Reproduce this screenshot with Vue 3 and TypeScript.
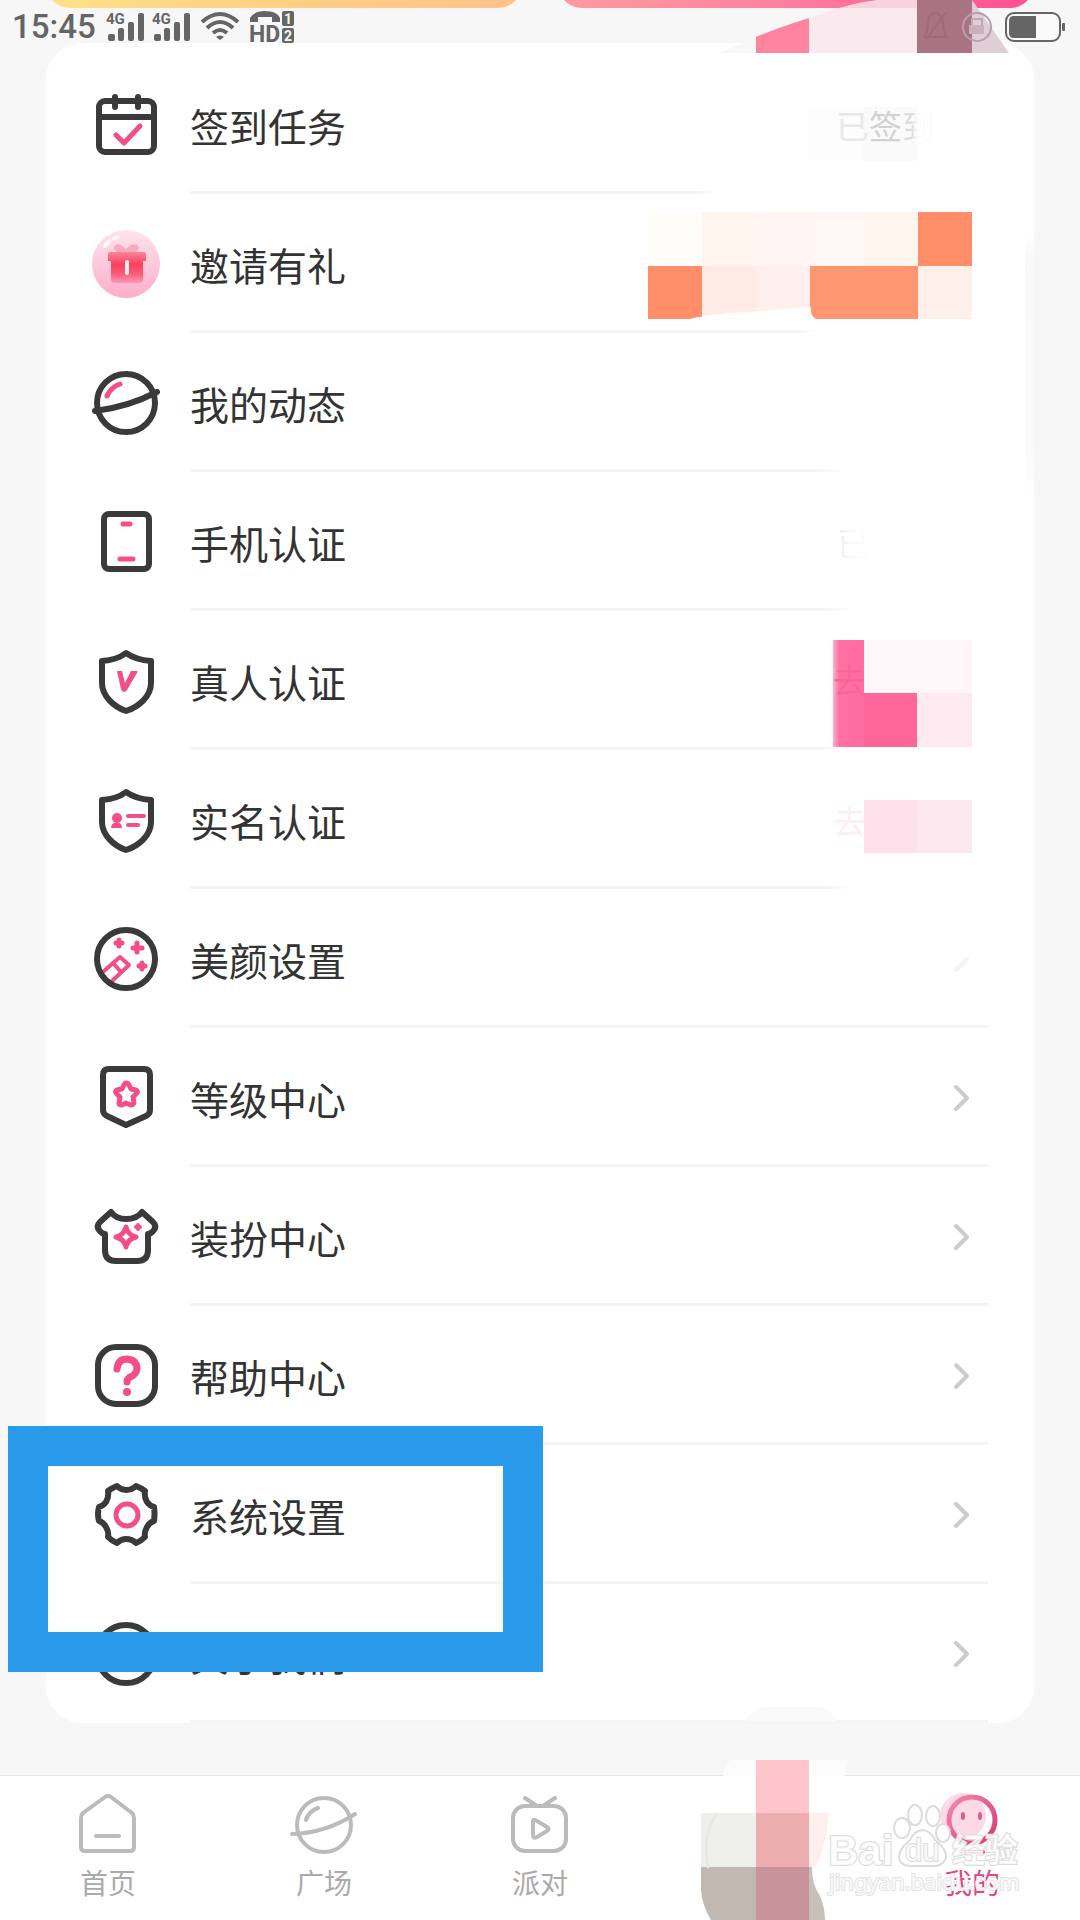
<script setup lang="ts">
interface MenuRow {
  id: string
  label: string
  ruleWidth: number
  trailing: 'chevron' | 'checked' | 'invite' | 'phone' | 'person' | 'identity' | 'faded' | 'none'
}

const rows: MenuRow[] = [
  { id: 'calendar', label: '签到任务', ruleWidth: 66, trailing: 'checked' },
  { id: 'gift', label: '邀请有礼', ruleWidth: 79, trailing: 'invite' },
  { id: 'moments', label: '我的动态', ruleWidth: 82, trailing: 'none' },
  { id: 'phone', label: '手机认证', ruleWidth: 83, trailing: 'phone' },
  { id: 'person', label: '真人认证', ruleWidth: 82, trailing: 'person' },
  { id: 'identity', label: '实名认证', ruleWidth: 83, trailing: 'identity' },
  { id: 'beauty', label: '美颜设置', ruleWidth: 100, trailing: 'faded' },
  { id: 'level', label: '等级中心', ruleWidth: 100, trailing: 'chevron' },
  { id: 'outfit', label: '装扮中心', ruleWidth: 100, trailing: 'chevron' },
  { id: 'help', label: '帮助中心', ruleWidth: 100, trailing: 'chevron' },
  { id: 'settings', label: '系统设置', ruleWidth: 100, trailing: 'chevron' },
  { id: 'about', label: '关于我们', ruleWidth: 100, trailing: 'chevron' }
]

const inviteCells: string[] = [
  '#fffdfa', '#fff6f0', '#fff6f3', '#fff7f6', '#fff6f0', '#ff8e69',
  '#ff8e69', '#feebe5', '#fff0ed', '#ff9671', '#ff9671', '#fff0eb'
]
</script>

<template>
  <div class="page">
    <header class="top">
      <div class="promos">
        <div class="promo gold"></div>
        <div class="promo rose"></div>
      </div>
      <svg class="top-veil" width="300" height="53" viewBox="720 0 300 53" aria-hidden="true">
        <path d="M718 53 Q738 45 756 38 V53Z" fill="#f8f8f8" />
        <path d="M756 37 Q780 27 809 18 V53 H756Z" fill="#ff84a0" />
        <path d="M809 18 Q850 3 880 0 H917 V53 H809Z" fill="#fae9ee" />
        <path d="M840 8 Q862 1 880 0 H917 V8Z" fill="#f8d3df" />
        <path d="M917 0 H972 V53 H917Z" fill="#a97383" />
        <path d="M972 0 L1009 53 H972Z" fill="#dfced5" />
        <g fill="none" stroke-width="2">
          <path d="M924 37 H947 Q943 32 943 24 Q942 13 935 13 Q928 14 928 24 Q928 32 924 37 M926 40 L946 12" stroke="#9f6b7b" />
          <circle cx="977" cy="27" r="14" stroke="#b99fa9" />
          <path d="M972 26 V19 H982 V26" stroke="#c0a8b1" />
        </g>
        <path d="M969 25 H984 V34 H969Z" fill="#c8b1bb" />
      </svg>
      <div class="status">
        <span class="clock">15:45</span>
        <svg width="84" height="32" viewBox="106 11 84 32" fill="#656565" aria-hidden="true">
          <g v-for="x in [0, 46]" :key="x" :transform="`translate(${x} 0)`">
            <text x="106" y="24" class="net">4G</text>
            <rect x="108" y="34" width="7" height="7" rx="2" />
            <rect x="118" y="28" width="6" height="13" rx="2" />
            <rect x="128" y="22" width="6" height="19" rx="2" />
            <rect x="138" y="13" width="6" height="28" rx="2" />
          </g>
        </svg>
        <svg width="40" height="32" viewBox="200 11 40 32" fill="none" stroke="#656565" stroke-width="4" aria-hidden="true">
          <path d="M202 22 Q220 6 238 22 M207 28 Q220 16 233 28 M213 33 Q220 27 227 33" />
          <path d="M216 37 Q220 34 224 37 L220 40Z" fill="#656565" stroke="none" />
        </svg>
        <svg width="45" height="32" viewBox="250 11 45 32" fill="#656565" aria-hidden="true">
          <path d="M250 22 V18 Q254 11 265 11 Q277 11 280 18 V22 H272 V17 H258 V22Z" />
          <text x="249" y="42" class="hd">HD</text>
          <rect x="282" y="11" width="12" height="15" rx="2" />
          <rect x="282" y="28" width="12" height="15" rx="2" />
          <text x="284" y="24" class="sim">1</text>
          <text x="284" y="41" class="sim">2</text>
        </svg>
        <svg class="battery" width="61" height="32" viewBox="1005 11 61 32" aria-hidden="true">
          <rect x="1006" y="13" width="54" height="28" rx="8" fill="#f9f9f9" stroke="#656565" stroke-width="2" />
          <path d="M1036 16 H1014 Q1009 16 1009 21 V33 Q1009 38 1014 38 H1036Z" fill="#656565" />
          <rect x="1062" y="23" width="3" height="8" rx="1" fill="#656565" />
        </svg>
      </div>
    </header>

    <main class="card">
      <div class="edge"></div>
      <ul class="menu">
        <li v-for="row in rows" :key="row.id" class="row">
          <a class="link" href="#">
            <svg class="icon" width="72" height="72" viewBox="0 0 72 72" aria-hidden="true">
              <g v-if="row.id === 'calendar'">
                <rect x="9" y="12" width="55" height="51" rx="6" />
                <path d="M9 28 H64 M25 8 V18 M48 8 V18" />
                <path class="pink" d="M26 46 L34 54 L50 37" />
              </g>
              <g v-else-if="row.id === 'gift'">
                <defs>
                  <linearGradient id="bubble" x1="0" y1="0" x2="0" y2="1">
                    <stop offset="0" stop-color="#fce4ed" /><stop offset="1" stop-color="#fdaecb" />
                  </linearGradient>
                  <linearGradient id="box" x1="0" y1="24" x2="0" y2="55" gradientUnits="userSpaceOnUse">
                    <stop offset="0" stop-color="#f9859b" /><stop offset=".4" stop-color="#fb405d" /><stop offset=".7" stop-color="#fb5a76" /><stop offset="1" stop-color="#fc9ab6" />
                  </linearGradient>
                </defs>
                <circle cx="36" cy="36" r="34" fill="url(#bubble)" stroke="none" />
                <path d="M36 24 Q27 15 26 20 Q26 23 36 24 Q46 23 47 20 Q45 15 36 24" stroke="#fba9bd" stroke-width="4" />
                <path d="M20 24 H54 Q56 24 56 27 V33 H53 V51 Q53 55 49 55 H25 Q21 55 21 51 V33 H18 V27 Q18 24 20 24Z" fill="url(#box)" stroke="none" />
                <path d="M37 34 V45" stroke="#fff0f3" stroke-width="4" />
                <path d="M15 18 Q20 11 28 9" stroke="#fff6fa" stroke-width="4" stroke-dasharray="7 5" />
              </g>
              <g v-else-if="row.id === 'moments'">
                <circle cx="36" cy="36" r="29" />
                <path d="M5 44 Q38 40 67 25" />
                <path class="pink" d="M17 29 Q21 20 30 17" />
              </g>
              <g v-else-if="row.id === 'phone'">
                <rect x="14" y="8" width="45" height="55" rx="5" />
                <path class="pink" d="M33 18 H40 M30 53 H43" />
              </g>
              <g v-else-if="row.id === 'person' || row.id === 'identity'">
                <path d="M36 8 Q27 15 12 16 V38 C12 51 24 62 36 66 C49 62 61 51 61 38 V16 Q46 15 36 8Z" />
                <path v-if="row.id === 'person'" d="M27 26 H32 L35 38 L41 26 H47 Q48 27 47 28 L37 45 Q36 47 34 47 Q32 47 31 44Z" fill="#f44e87" stroke="none" />
                <g v-else>
                  <circle cx="27" cy="34" r="5" fill="#f44e87" stroke="none" />
                  <path d="M21 44 Q21 39 27 38 Q32 39 32 44Z" fill="#f44e87" stroke="none" />
                  <path class="pink thin" d="M38 32 H54 M38 41 H48" />
                </g>
              </g>
              <g v-else-if="row.id === 'beauty'">
                <path class="pink thin" d="M14 48 L30 34 L39 42 L21 59 M23 40 L31 49" stroke-width="5" />
                <circle cx="36" cy="36" r="29" />
                <path class="pink" d="M26 20 H32 M29 17 V23 M43 25 H52 M47 20 V29 M49 43 H55 M52 40 V46" />
              </g>
              <g v-else-if="row.id === 'level'">
                <path d="M13 13 Q13 7 19 7 H54 Q60 7 60 13 V48 Q60 52 56 54 L36 63 L17 54 Q13 52 13 48Z" />
                <path class="pink" d="M36 21 Q38 21 39 23 L41 27 L46 28 Q48 29 47 31 L43 35 L44 41 Q43 43 41 43 L36 41 L32 43 Q29 43 29 41 L30 35 L26 31 Q25 29 27 28 L32 27 L34 23 Q35 21 36 21Z" />
              </g>
              <g v-else-if="row.id === 'outfit'">
                <path d="M21 11 L10 21 Q6 25 9 29 Q12 33 15 33 V49 Q15 60 26 60 H47 Q58 60 58 49 V33 Q61 33 64 29 Q67 25 63 21 L52 11 Q47 18 36 18 Q26 18 21 11Z" />
                <path class="pink" d="M36 26 Q38 34 46 36 Q38 38 36 46 Q34 38 26 36 Q34 34 36 26Z" />
                <path class="pink thin" d="M48 24 V28 M46 26 H50" />
              </g>
              <g v-else-if="row.id === 'help'">
                <rect x="8" y="7" width="57" height="57" rx="18" />
                <path class="pink bold" d="M27 29 Q28 19 37 19 Q47 20 47 29 Q46 35 40 37 Q37 39 37 42" />
                <circle cx="37" cy="52" r="4" fill="#f44e87" stroke="none" />
              </g>
              <g v-else-if="row.id === 'settings'">
                <path d="M27 7 Q31 11 36 11 Q42 11 46 7 Q51 9 55 12 Q54 18 57 23 Q60 27 64 28 Q65 35 64 42 Q60 43 57 48 Q54 53 55 58 Q51 62 46 64 Q42 60 36 60 Q31 60 27 64 Q22 62 18 58 Q19 53 16 48 Q13 43 9 42 Q7 35 9 28 Q13 27 16 23 Q19 18 18 12 Q22 9 27 7Z" />
                <circle class="pink" cx="37" cy="36" r="11" />
              </g>
              <g v-else>
                <circle cx="36" cy="36" r="29" />
              </g>
            </svg>
            <span class="body">
              <span class="line">
                <span class="label">{{ row.label }}</span>
                <svg v-if="row.trailing === 'chevron'" class="chevron" width="24" height="32" viewBox="0 0 24 32" aria-hidden="true">
                  <path d="M6 5 L17 16 L6 27" />
                </svg>
                <svg v-else-if="row.trailing === 'faded'" class="chevron faded" width="24" height="32" viewBox="0 0 24 32" aria-hidden="true">
                  <path d="M17 16 L6 27" />
                </svg>
                <span v-else-if="row.trailing === 'checked'" class="checked">
                  <span class="checked-text"><span class="ghost">已</span>签<span class="cut">到</span></span>
                </span>
                <span v-else-if="row.trailing === 'invite'" class="mosaic">
                  <span v-for="(cell, i) in inviteCells" :key="i" :style="{ background: cell }"></span>
                  <svg class="smear" width="324" height="107" viewBox="0 0 324 107" aria-hidden="true">
                    <path d="M42 107 Q52 104 80 101 Q120 99 163 95 Q162 104 168 107Z" fill="#fff" />
                  </svg>
                </span>
                <span v-else-if="row.trailing === 'phone'" class="trace">已</span>
                <span v-else-if="row.trailing === 'person'" class="tag">
                  <span class="go">去</span><span class="c1"></span><span class="c2"></span><span class="c3"></span><span class="c4"></span>
                </span>
                <span v-else-if="row.trailing === 'identity'" class="strip">
                  <span class="go">去</span><span class="s1"></span><span class="s2"></span>
                </span>
              </span>
              <span class="rule" :style="{ width: row.ruleWidth + '%' }" :class="{ soft: row.ruleWidth < 100 }"></span>
            </span>
          </a>
          <div v-if="row.id === 'settings'" class="highlight"></div>
        </li>
      </ul>
    </main>

    <nav class="tabs">
      <a class="tab" href="#">
        <svg width="72" height="68" viewBox="0 0 72 68" aria-hidden="true">
          <path d="M9 28 Q9 25 11 23 L33 7 Q36 5 39 7 L60 23 Q62 25 62 28 V57 Q62 61 58 61 H13 Q9 61 9 57Z M24 46 H47" />
        </svg>
        <span>首页</span>
      </a>
      <a class="tab" href="#">
        <svg width="72" height="68" viewBox="0 0 72 68" aria-hidden="true">
          <circle cx="36" cy="35" r="27" />
          <path d="M4 44 Q38 43 67 24 M18 30 Q21 21 30 18" />
        </svg>
        <span>广场</span>
      </a>
      <a class="tab" href="#">
        <svg width="72" height="68" viewBox="0 0 72 68" aria-hidden="true">
          <rect x="9" y="16" width="53" height="45" rx="12" />
          <path d="M21 8 L33 16 M51 8 L39 16 M29 32 Q29 28 33 31 L43 37 Q46 39 43 41 L33 47 Q29 49 29 45Z" />
        </svg>
        <span>派对</span>
      </a>
      <a class="tab" href="#" aria-label="消息">
        <svg class="blot" width="216" height="213" viewBox="648 1707 216 213" aria-hidden="true">
          <path d="M745 1722 Q750 1710 764 1707 H820 Q832 1710 838 1722Z" fill="#f9f9f9" />
          <path d="M723 1776 Q725 1763 731 1760 H848 Q845 1766 845 1776Z" fill="#fcfcfc" />
          <path d="M701 1813 H756 V1867 H701Z" fill="#efefed" />
          <path d="M701 1867 H756 V1920 H711 Q702 1905 701 1890Z" fill="#c1b8b1" />
          <path d="M809 1813 H829 Q826 1845 816 1867 H809Z" fill="#feeeee" />
          <path d="M809 1867 H812 Q812 1885 820 1896 Q825 1908 825 1920 H809Z" fill="#c9c0b9" />
          <path d="M756 1760 H809 V1813 H756Z" fill="#ffc5cb" />
          <path d="M756 1813 H809 V1867 H756Z" fill="#ebadb0" />
          <path d="M756 1867 H809 V1920 H756Z" fill="#c9939b" />
          <path d="M708 1867 Q702 1835 716 1815" fill="none" stroke="#e8e8e6" stroke-width="3" />
        </svg>
      </a>
      <a class="tab active" href="#">
        <svg width="72" height="68" viewBox="0 0 72 68" aria-hidden="true">
          <defs>
            <linearGradient id="face" x1="0" y1="0" x2="1" y2="1">
              <stop offset="0" stop-color="#f38bb1" /><stop offset="1" stop-color="#d93672" />
            </linearGradient>
          </defs>
          <circle cx="27" cy="26" r="23" fill="#fdd9e5" stroke="none" />
          <circle cx="36" cy="30" r="23" stroke="url(#face)" stroke-width="5" />
          <ellipse cx="27" cy="26" rx="2" ry="4" fill="#e25a8a" stroke="none" />
          <ellipse cx="44" cy="26" rx="2" ry="4" fill="#e25a8a" stroke="none" />
          <path d="M25 62 H47" stroke="#e2457f" />
        </svg>
        <span>我的</span>
      </a>
      <svg class="watermark" width="200" height="100" viewBox="825 1800 200 100" aria-hidden="true">
        <g fill="#fff" fill-opacity=".8" stroke="#dcdcdc" stroke-width="2">
          <ellipse cx="902" cy="1828" rx="8" ry="10" />
          <ellipse cx="915" cy="1815" rx="7" ry="10" />
          <ellipse cx="933" cy="1816" rx="7" ry="10" />
          <ellipse cx="943" cy="1833" rx="7" ry="9" />
          <path d="M922 1830 Q930 1830 935 1840 Q947 1849 946 1858 Q942 1867 932 1866 H912 Q899 1866 899 1856 Q900 1848 910 1840 Q914 1831 922 1830Z" />
          <text x="828" y="1865" class="wm-big">Bai</text>
          <text x="905" y="1861" class="wm-du">du</text>
          <text x="952" y="1862" class="wm-cn">经验</text>
          <text x="829" y="1890" class="wm-url">jingyan.baidu.com</text>
        </g>
      </svg>
    </nav>
  </div>
</template>

<style>
body {
  background: #f7f7f7;
}
</style>

<style scoped>
.page {
  display: flex;
  flex-direction: column;
  min-height: 100vh;
  overflow: hidden;
  background: #f7f7f7;
  color: #333;
  font-family: "Noto Sans CJK SC", "Noto Sans", sans-serif;
}

.top {
  position: relative;
  height: 43px;
}

.promos {
  display: flex;
  gap: 36px;
  height: 8px;
  padding: 0 46px;
  overflow: hidden;
  align-items: flex-end;
}

.promo {
  flex: 1;
  height: 60px;
  border-radius: 24px;
}

.gold {
  background: linear-gradient(90deg, #ffe189, #ffd082 50%, #ffc28c);
}

.rose {
  background: linear-gradient(90deg, #ff9a9f, #ff86a0 40%, #ff4f90);
}

.top-veil {
  position: absolute;
  top: 0;
  right: 60px;
  z-index: 2;
}

.status {
  position: relative;
  z-index: 3;
  display: flex;
  align-items: center;
  gap: 10px;
  height: 32px;
  margin-top: 3px;
  padding: 0 14px 0 12px;
}

.clock {
  width: 84px;
  color: #656565;
  font: 500 33px/36px Roboto, sans-serif;
}

.net {
  font: 700 15px Roboto, sans-serif;
}

.hd {
  font: 700 23px Roboto, sans-serif;
}

.sim {
  fill: #f7f7f7;
  font: 700 14px Roboto, sans-serif;
}

.battery {
  margin-left: auto;
}

.card {
  position: relative;
  margin: 0 46px 52px;
  padding: 12px 46px 0 44px;
  border-radius: 36px;
  background: #fff;
}

.edge {
  position: absolute;
  top: 188px;
  right: 0;
  width: 9px;
  height: 270px;
  background: linear-gradient(#fff, #f9f9f9 10%, #fafafa 80%, #fff);
}

.menu {
  margin: 0;
  padding: 0;
  list-style: none;
}

.row {
  position: relative;
}

.link {
  display: flex;
  gap: 28px;
  height: 139px;
  color: inherit;
  text-decoration: none;
}

.icon {
  flex: none;
  margin-top: 34px;
  fill: none;
  stroke: #3a3a3a;
  stroke-width: 6px;
  stroke-linecap: round;
  stroke-linejoin: round;
}

.pink {
  stroke: #f44e87;
  stroke-width: 5px;
}

.thin {
  stroke-width: 4px;
}

.bold {
  stroke-width: 7px;
}

.body {
  display: flex;
  flex: 1;
  flex-direction: column;
}

.line {
  display: flex;
  flex: 1;
  align-items: center;
  justify-content: space-between;
  padding: 3px 14px 0 0;
}

.label {
  font-size: 39px;
  line-height: 56px;
}

.rule {
  height: 3px;
  background: #f4f4f4;
}

.soft {
  background: linear-gradient(90deg, #f4f4f4 96%, #fff);
}

.chevron {
  fill: none;
  stroke: #ccc;
  stroke-width: 4px;
  stroke-linecap: round;
  stroke-linejoin: round;
}

.faded {
  stroke: #f4f4f4;
}

.checked {
  align-self: flex-start;
  width: 108px;
  height: 54px;
  margin: 49px 57px 0 0;
  background: linear-gradient(90deg, #fdfdfd 50%, #fafafa 50%);
}

.checked-text {
  display: block;
  padding-left: 27px;
  color: #d2d2d2;
  font-size: 33px;
  line-height: 36px;
  white-space: nowrap;
}

.ghost {
  color: #e8e8e8;
}

.cut {
  color: transparent;
  background: linear-gradient(90deg, #ddd 30%, #fafafa 45%, #fdfdfd);
  background-clip: text;
}

.mosaic {
  position: relative;
  display: grid;
  grid-template-columns: repeat(6, 54px);
  grid-template-rows: 54px 53px;
  margin: 4px 2px 0 0;
}

.smear {
  position: absolute;
  inset: 0;
}

.trace {
  width: 33px;
  margin-right: 104px;
  color: transparent;
  background: linear-gradient(90deg, #ededed 10%, #fafafa 40%, #fdfdfd);
  background-clip: text;
  font-size: 33px;
  line-height: 44px;
}

.tag {
  display: grid;
  grid-template: 53px 54px / 31px 53px 55px;
  margin: 1px 2px 0 0;
  padding-top: 24px;
}

.go {
  overflow: hidden;
  font-size: 33px;
}

.tag .go {
  grid-row: 1 / 3;
  background: linear-gradient(90deg, #ffb0cc, #ff71a2 20%, #ff6ca0);
  color: #fb6498;
  line-height: 78px;
}

.c1,
.c2 {
  background: #fff6f9;
}

.c3 {
  background: #ff679b;
}

.c4 {
  background: #fdeaf1;
}

.strip {
  display: flex;
  width: 139px;
  height: 53px;
  margin: 13px 2px 0 0;
}

.strip .go {
  width: 31px;
  color: #feeef3;
  line-height: 40px;
}

.s1 {
  width: 53px;
  background: #fde0ea;
}

.s2 {
  width: 55px;
  background: #fde8ef;
}

.highlight {
  position: absolute;
  top: -19px;
  left: -82px;
  z-index: 2;
  box-sizing: border-box;
  width: 535px;
  height: 246px;
  border: 40px solid #2a9aea;
}

.tabs {
  position: relative;
  display: flex;
  height: 144px;
  margin-top: auto;
  border-top: 1px solid #e8e8e8;
  background: #fff;
}

.tab {
  position: relative;
  display: flex;
  flex: 1;
  flex-direction: column;
  align-items: center;
  padding-top: 14px;
  color: #aaa;
  font-size: 28px;
  line-height: 40px;
  text-decoration: none;
  fill: none;
  stroke: #bbb;
  stroke-width: 4px;
  stroke-linecap: round;
  stroke-linejoin: round;
}

.tab span {
  margin-top: 4px;
}

.active {
  color: #e2457f;
}

.blot {
  position: absolute;
  bottom: 0;
  left: 0;
  stroke: none;
}

.watermark {
  position: absolute;
  right: 55px;
  bottom: 20px;
}

.watermark text {
  paint-order: stroke;
}

.wm-big {
  font: 700 42px "Liberation Sans", sans-serif;
}

.wm-du {
  font: 400 31px "Liberation Sans", sans-serif;
}

.wm-cn {
  font: 700 33px "Noto Sans CJK SC", sans-serif;
}

.wm-url {
  stroke: #e4e4e4;
  font: 400 22px "Noto Sans", sans-serif;
}
</style>
